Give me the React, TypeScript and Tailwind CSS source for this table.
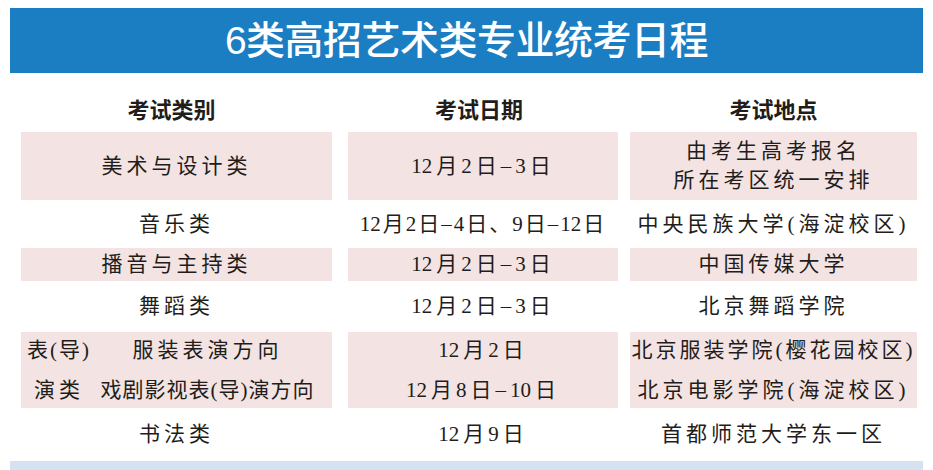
const font = { fontFamily: '"Liberation Serif", "Noto Sans CJK SC", serif' };

// digits stay tight, everything else gets the letter spacing
const Spaced = ({ text, gap = 'tracking-[4px]' }: { text: string; gap?: string }) => (
  <span className={`${gap} whitespace-nowrap`}>
    {text.split('').map((ch, i) => {
      const next = text[i + 1];
      const tight = /[0-9]/.test(ch) && next !== undefined && /[0-9]/.test(next);
      return (
        <span key={i} className={tight ? 'tracking-normal' : ''}>
          {ch}
        </span>
      );
    })}
  </span>
);

const Cell = ({ pink, w, ml, children }: { pink?: boolean; w: string; ml?: string; children: React.ReactNode }) => (
  <div className={`${w} ${ml ?? ''} ${pink ? 'bg-[#f3e3e3]' : ''} shrink-0 flex flex-col items-center justify-center`}>
    {children}
  </div>
);

const Row = ({ h, pink, a, b, c }: { h: string; pink?: boolean; a: React.ReactNode; b: React.ReactNode; c: React.ReactNode }) => (
  <div className={`${h} flex pl-[21px]`}>
    <Cell pink={pink} w="w-[311px]">{a}</Cell>
    <Cell pink={pink} w="w-[270px]" ml="ml-[16px]">{b}</Cell>
    <Cell pink={pink} w="w-[287px]" ml="ml-[12px]">{c}</Cell>
  </div>
);

export default function App() {
  return (
    <div className="w-[933px] h-[470px] bg-white overflow-hidden text-[#221c1a] text-[21px] leading-none" style={font}>
      <div className="mx-[10px] mt-[8px] h-[65px] bg-[#1b7ec3] flex items-center justify-center">
        <h1 className="text-white text-[39px] font-medium tracking-[-0.5px] font-['Liberation_Sans','Noto_Sans_CJK_SC',sans-serif]">
          6类高招艺术类专业统考日程
        </h1>
      </div>

      <div className="h-[59px] flex pl-[21px] pt-[10px] font-['Noto_Sans_CJK_SC',sans-serif] font-bold text-[22px]">
        <div className="w-[311px] flex items-center justify-center pr-[10px]">考试类别</div>
        <div className="w-[270px] ml-[16px] flex items-center justify-center pr-[8px]">考试日期</div>
        <div className="w-[287px] ml-[12px] flex items-center justify-center">考试地点</div>
      </div>

      <Row
        h="h-[68px]"
        pink
        a={<Spaced text="美术与设计类" />}
        b={<Spaced text="12月2日–3日" />}
        c={
          <div className="flex flex-col items-center leading-[29px]">
            <Spaced text="由考生高考报名" />
            <Spaced text="所在考区统一安排" />
          </div>
        }
      />
      <Row
        h="h-[48px]"
        a={<Spaced text="音乐类" />}
        b={<Spaced text="12月2日–4日、9日–12日" gap="tracking-[2px]" />}
        c={<Spaced text="中央民族大学(海淀校区)" />}
      />
      <Row
        h="h-[33px]"
        pink
        a={<Spaced text="播音与主持类" />}
        b={<Spaced text="12月2日–3日" />}
        c={<Spaced text="中国传媒大学" />}
      />
      <Row
        h="h-[51px]"
        a={<Spaced text="舞蹈类" />}
        b={<Spaced text="12月2日–3日" />}
        c={<Spaced text="北京舞蹈学院" />}
      />
      <div className="h-[76px] flex pl-[21px]">
        <div className="w-[311px] shrink-0 bg-[#f3e3e3] flex items-center">
          <div className="w-[76px] shrink-0 flex flex-col items-center leading-[40px]">
            <Spaced text="表(导)" gap="tracking-[2px]" />
            <Spaced text="演类" />
          </div>
          <div className="w-[221px] shrink-0 flex flex-col items-center leading-[40px]">
            <Spaced text="服装表演方向" />
            <Spaced text="戏剧影视表(导)演方向" gap="tracking-[1px]" />
          </div>
        </div>
        <div className="w-[270px] shrink-0 ml-[16px] bg-[#f3e3e3] flex flex-col items-center justify-center leading-[40px]">
          <Spaced text="12月2日" />
          <Spaced text="12月8日–10日" />
        </div>
        <div className="w-[287px] shrink-0 ml-[12px] bg-[#f3e3e3] flex flex-col items-center justify-center leading-[40px]">
          <Spaced text="北京服装学院(樱花园校区)" gap="tracking-[3px]" />
          <Spaced text="北京电影学院(海淀校区)" />
        </div>
      </div>
      <Row
        h="h-[53px]"
        a={<Spaced text="书法类" />}
        b={<Spaced text="12月9日" />}
        c={<Spaced text="首都师范大学东一区" />}
      />
      <div className="mx-[10px] h-[9px] bg-[#d4e2f1]" />
    </div>
  );
}
